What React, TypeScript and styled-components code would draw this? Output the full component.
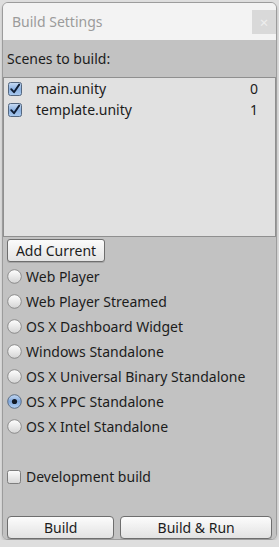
import React, { useState } from 'react';
import styled, { createGlobalStyle } from 'styled-components';

const GlobalStyle = createGlobalStyle`
  html, body {
    margin: 0;
    padding: 0;
    background: #dedede;
  }
  body {
    font-family: "Noto Sans", "DejaVu Sans", sans-serif;
  }
`;

const platforms = [
  'Web Player',
  'Web Player Streamed',
  'OS X Dashboard Widget',
  'Windows Standalone',
  'OS X Universal Binary Standalone',
  'OS X PPC Standalone',
  'OS X Intel Standalone',
];

const scenes = [
  { name: 'main.unity', index: 0 },
  { name: 'template.unity', index: 1 },
];

// 체크박스 그림
const CheckIcon = ({ checked }: { checked: boolean }) => (
  <svg width="14" height="14" viewBox="0 0 14 14">
    <defs>
      <linearGradient id={checked ? 'cbOn' : 'cbOff'} x1="0" y1="0" x2="0" y2="1">
        {checked ? (
          <>
            <stop offset="0" stopColor="#c9dcf3" />
            <stop offset="0.5" stopColor="#8db3e3" />
            <stop offset="1" stopColor="#a9c9ee" />
          </>
        ) : (
          <>
            <stop offset="0" stopColor="#fdfdfd" />
            <stop offset="1" stopColor="#d6d6d6" />
          </>
        )}
      </linearGradient>
    </defs>
    <rect
      x="0.5"
      y="0.5"
      width="13"
      height="13"
      rx="2"
      fill={`url(#${checked ? 'cbOn' : 'cbOff'})`}
      stroke={checked ? '#54677f' : '#7d7d7d'}
    />
    {checked && (
      <path d="M3.2 7.2 L6 10.2 L11.2 2.6" fill="none" stroke="#0f1d33" strokeWidth="1.9" strokeLinecap="round" strokeLinejoin="round" />
    )}
  </svg>
);

const RadioIcon = ({ checked }: { checked: boolean }) => (
  <svg width="15" height="15" viewBox="0 0 15 15">
    <defs>
      <linearGradient id={checked ? 'rdOn' : 'rdOff'} x1="0" y1="0" x2="0" y2="1">
        {checked ? (
          <>
            <stop offset="0" stopColor="#c6daf3" />
            <stop offset="0.5" stopColor="#7fa7dc" />
            <stop offset="1" stopColor="#b7d2f2" />
          </>
        ) : (
          <>
            <stop offset="0" stopColor="#ffffff" />
            <stop offset="1" stopColor="#d4d4d4" />
          </>
        )}
      </linearGradient>
    </defs>
    <circle
      cx="7.5"
      cy="7.5"
      r="6.8"
      fill={`url(#${checked ? 'rdOn' : 'rdOff'})`}
      stroke={checked ? '#53657c' : '#858585'}
      strokeWidth="0.9"
    />
    {checked && <circle cx="7.5" cy="7.5" r="2.6" fill="#121a26" />}
  </svg>
);

const App: React.FC = () => {
  const [selected, setSelected] = useState(5);
  const [devBuild, setDevBuild] = useState(false);

  return (
    <>
      <GlobalStyle />
      <Window>
        <TitleBar>
          <Title>Build Settings</Title>
          <CloseButton>×</CloseButton>
        </TitleBar>

        <Body>
          <SectionLabel>Scenes to build:</SectionLabel>

          <SceneList>
            {scenes.map(scene => (
              <SceneRow key={scene.name}>
                <CheckIcon checked />
                <SceneName>{scene.name}</SceneName>
                <SceneIndex>{scene.index}</SceneIndex>
              </SceneRow>
            ))}
          </SceneList>

          <Controls>
            <AddButton>Add Current</AddButton>

            <RadioGroup>
              {platforms.map((p, i) => (
                <OptionRow key={p} onClick={() => setSelected(i)}>
                  <RadioIcon checked={selected === i} />
                  <OptionText>{p}</OptionText>
                </OptionRow>
              ))}
            </RadioGroup>

            <DevRow onClick={() => setDevBuild(!devBuild)}>
              <CheckIcon checked={devBuild} />
              <OptionText>Development build</OptionText>
            </DevRow>

            <ButtonBar>
              <PushButton $grow={107}>Build</PushButton>
              <PushButton $grow={152}>Build &amp; Run</PushButton>
            </ButtonBar>
          </Controls>
        </Body>
      </Window>
    </>
  );
};

const Window = styled.div`
  margin: 2px 2px 0 2px;
  height: 538px;
  box-sizing: border-box;
  border: 1px solid #9c9c9c;
  border-radius: 6px;
  overflow: hidden;
  display: flex;
  flex-direction: column;
  box-shadow: 0 2px 3px rgba(0, 0, 0, 0.15);
`;

const TitleBar = styled.div`
  height: 37px;
  flex: none;
  background: #f3f3f3;
  display: flex;
  align-items: center;
  justify-content: space-between;
  padding: 0 0 0 9px;
`;

const Title = styled.div`
  font-size: 14px;
  color: #9b9b9b;
`;

const CloseButton = styled.div`
  width: 24px;
  height: 24px;
  background: #d9d9d9;
  color: #eeeeee;
  font-size: 15px;
  line-height: 24px;
  text-align: center;
`;

const Body = styled.div`
  flex: 1;
  background: #c2c2c2;
  display: flex;
  flex-direction: column;
`;

const SectionLabel = styled.div`
  height: 37px;
  display: flex;
  align-items: center;
  padding-left: 4px;
  font-size: 14px;
  color: #1c1c1c;
`;

const SceneList = styled.div`
  height: 160px;
  box-sizing: border-box;
  background: #e1e1e1;
  border: 1px solid #8f8f8f;
`;

const SceneRow = styled.div`
  height: 21px;
  display: flex;
  align-items: center;
  padding-left: 4px;
  padding-right: 17px;
`;

const SceneName = styled.span`
  flex: 1;
  margin-left: 14px;
  font-size: 14px;
  color: #1c1c1c;
`;

const SceneIndex = styled.span`
  font-size: 14px;
  color: #1c1c1c;
`;

const Controls = styled.div`
  padding: 2px 3px 0 4px;
  display: flex;
  flex-direction: column;
`;

const AddButton = styled.button`
  align-self: flex-start;
  height: 23px;
  width: 98px;
  padding: 0;
  font-family: inherit;
  font-size: 14px;
  color: #1c1c1c;
  border: 1px solid #6e6e6e;
  border-radius: 3px;
  background: linear-gradient(#fbfbfb, #e4e4e4);
  box-shadow: 0 1px 0 rgba(0, 0, 0, 0.15);
`;

const RadioGroup = styled.div`
  margin-top: 2px;
  display: flex;
  flex-direction: column;
`;

const OptionRow = styled.div`
  height: 25px;
  display: flex;
  align-items: center;
  gap: 4px;
  cursor: default;
`;

const DevRow = styled(OptionRow)`
  margin-top: 25px;
  gap: 5px;
`;

const OptionText = styled.span`
  font-size: 14px;
  color: #1c1c1c;
`;

const ButtonBar = styled.div`
  margin-top: 27px;
  display: flex;
  gap: 6px;
  padding-right: 1px;
`;

const PushButton = styled.button<{ $grow: number }>`
  flex: ${props => props.$grow} 1 0;
  height: 23px;
  padding: 0;
  font-family: inherit;
  font-size: 14px;
  color: #1c1c1c;
  border: 1px solid #6e6e6e;
  border-radius: 4px;
  background: linear-gradient(#fcfcfc, #e2e2e2);
  box-shadow: 0 1px 0 rgba(0, 0, 0, 0.15);
`;

export default App;
